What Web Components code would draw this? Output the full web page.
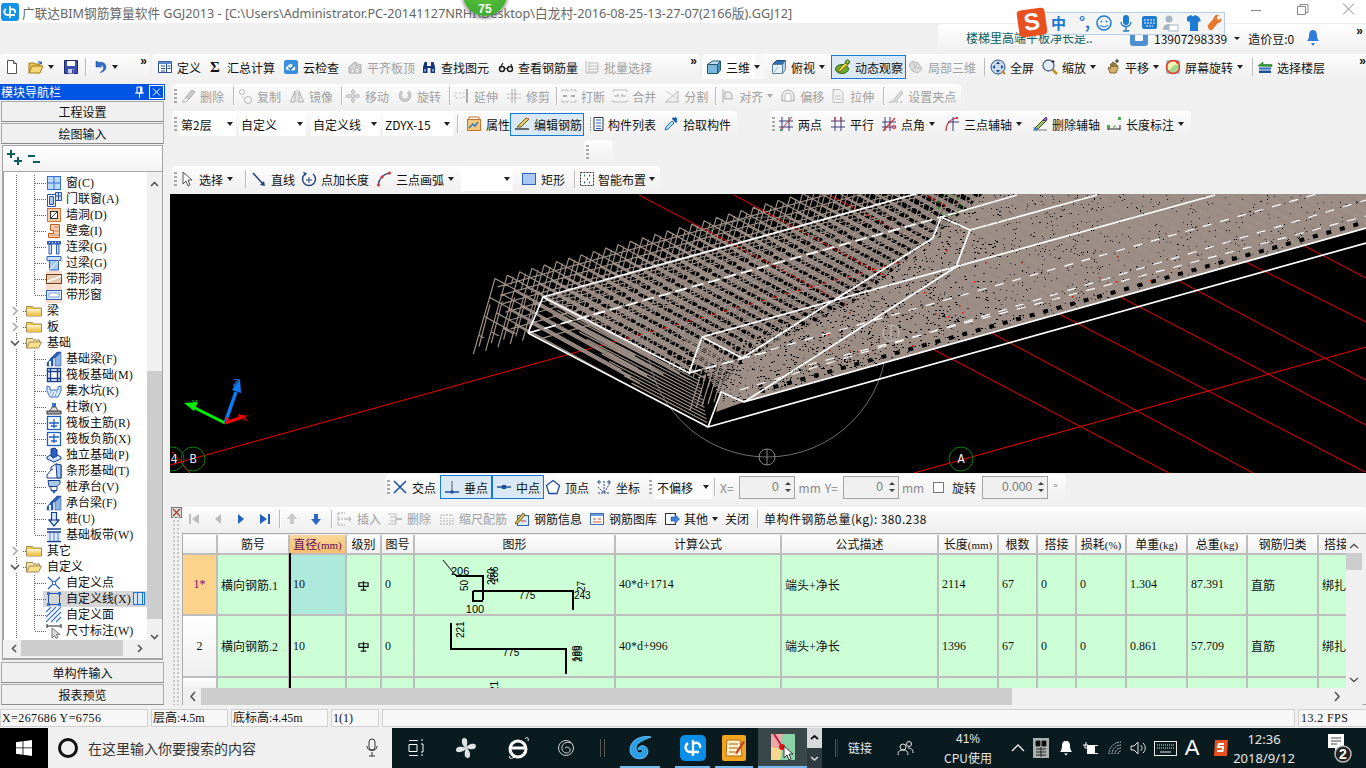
<!DOCTYPE html>
<html lang="zh">
<head>
<meta charset="utf-8">
<title>GGJ2013</title>
<style>
html,body{margin:0;padding:0;width:1366px;height:768px;overflow:hidden;background:#f0f0f0;font:12px "Noto Sans CJK SC","Noto Sans",sans-serif;color:#111}
</style>
</head>
<body>
<app-shell>
  <title-bar slot="title">广联达BIM钢筋算量软件 GGJ2013 - [C:\Users\Administrator.PC-20141127NRHI\Desktop\白龙村-2016-08-25-13-27-07(2166版).GGJ12]</title-bar>

  <top-row slot="top"></top-row>

  <tool-row slot="main-tools" style="height:26px">
    <tool-bar style="width:150px">
      <tb-btn icon="doc"></tb-btn><tb-btn icon="open" arrow></tb-btn><tb-btn icon="save" style="margin-left:1px"></tb-btn><tb-sep></tb-sep><tb-btn icon="undo" arrow style="margin-left:1px"></tb-btn><tb-more></tb-more>
    </tool-bar>
    <tool-bar style="margin-left:2px;width:548px;padding-left:1px">
      <tb-btn icon="define" style="margin-right:-2px">定义</tb-btn><tb-btn icon="sigma">汇总计算</tb-btn><tb-btn icon="cloud">云检查</tb-btn><tb-btn icon="level" disabled style="margin-right:-2px">平齐板顶</tb-btn><tb-btn icon="binoc" style="margin-right:1px">查找图元</tb-btn><tb-btn icon="glasses" style="margin-right:-2px">查看钢筋量</tb-btn><tb-btn icon="batch" disabled>批量选择</tb-btn><tb-more></tb-more>
    </tool-bar>
    <tool-bar style="margin-left:2px;flex:1">
      <tb-btn icon="cube" arrow plain>三维</tb-btn><tb-btn icon="cubetop" arrow style="margin-left:3px">俯视</tb-btn><tb-btn icon="orbit" active style="width:75px;margin-left:2px;margin-right:-2px">动态观察</tb-btn><tb-btn icon="local3d" disabled>局部三维</tb-btn><tb-sep style="margin:0 1px 0 4px"></tb-sep><tb-btn icon="full">全屏</tb-btn><tb-btn icon="zoomi" arrow>缩放</tb-btn><tb-btn icon="hand" arrow style="margin-left:1px;margin-right:-2px">平移</tb-btn><tb-btn icon="rotate" arrow>屏幕旋转</tb-btn><tb-sep style="margin:0 0 0 5px"></tb-sep><tb-btn icon="layers">选择楼层</tb-btn><tb-more></tb-more>
    </tool-bar>
  </tool-row>

  <nav-panel slot="nav">
    <tree-row level="2" icon="win">窗(C)</tree-row>
    <tree-row level="2" icon="doorwin">门联窗(A)</tree-row>
    <tree-row level="2" icon="hole">墙洞(D)</tree-row>
    <tree-row level="2" icon="niche">壁龛(I)</tree-row>
    <tree-row level="2" icon="lintel">连梁(G)</tree-row>
    <tree-row level="2" icon="guoliang">过梁(G)</tree-row>
    <tree-row level="2" icon="bandhole">带形洞</tree-row>
    <tree-row level="2" icon="bandwin" last>带形窗</tree-row>
    <tree-row level="1" icon="folder" twisty="closed">梁</tree-row>
    <tree-row level="1" icon="folder" twisty="closed">板</tree-row>
    <tree-row level="1" icon="folderopen" twisty="open">基础</tree-row>
    <tree-row level="2" icon="basebeam">基础梁(F)</tree-row>
    <tree-row level="2" icon="raft">筏板基础(M)</tree-row>
    <tree-row level="2" icon="pit">集水坑(K)</tree-row>
    <tree-row level="2" icon="pier">柱墩(Y)</tree-row>
    <tree-row level="2" icon="raftmain">筏板主筋(R)</tree-row>
    <tree-row level="2" icon="raftneg">筏板负筋(X)</tree-row>
    <tree-row level="2" icon="isolated">独立基础(P)</tree-row>
    <tree-row level="2" icon="strip">条形基础(T)</tree-row>
    <tree-row level="2" icon="pilecap">桩承台(V)</tree-row>
    <tree-row level="2" icon="basebeam">承台梁(F)</tree-row>
    <tree-row level="2" icon="pile">桩(U)</tree-row>
    <tree-row level="2" icon="band" last>基础板带(W)</tree-row>
    <tree-row level="1" icon="folder" twisty="closed">其它</tree-row>
    <tree-row level="1" icon="folderopen" twisty="open">自定义</tree-row>
    <tree-row level="2" icon="cpoint">自定义点</tree-row>
    <tree-row level="2" icon="cline" selected>自定义线(X)</tree-row>
    <tree-row level="2" icon="cface">自定义面</tree-row>
    <tree-row level="2" icon="dim" last>尺寸标注(W)</tree-row>
  </nav-panel>

  <tool-row slot="work" style="height:24px;margin-top:4px;padding-left:2px">
    <tool-bar grip style="height:24px;width:789px">
      <tb-btn icon="erase" disabled>删除</tb-btn><tb-sep style="margin:0 -1px 0 5px"></tb-sep><tb-btn icon="copy" disabled>复制</tb-btn><tb-btn icon="mirror" disabled>镜像</tb-btn><tb-sep style="margin:0 -1px 0 4px"></tb-sep><tb-btn icon="move" disabled>移动</tb-btn><tb-btn icon="spin" disabled>旋转</tb-btn><tb-sep style="margin:0 0 0 4px"></tb-sep><tb-btn icon="extend" disabled>延伸</tb-btn><tb-btn icon="trim" disabled>修剪</tb-btn><tb-sep style="margin:0 0 0 2px"></tb-sep><tb-btn icon="break" disabled style="margin-right:-1px">打断</tb-btn><tb-btn icon="merge" disabled>合并</tb-btn><tb-btn icon="split" disabled>分割</tb-btn><tb-sep style="margin:0 -1px 0 3px"></tb-sep><tb-btn icon="align" disabled arrow style="margin-right:-1px">对齐</tb-btn><tb-btn icon="offset" disabled style="margin-right:-2px">偏移</tb-btn><tb-btn icon="stretch" disabled>拉伸</tb-btn><tb-sep style="margin:0 -1px 0 5px"></tb-sep><tb-btn icon="grip2" disabled style="margin-left:1px">设置夹点</tb-btn>
    </tool-bar>
  </tool-row>

  <tool-row slot="work" style="height:26px;margin-top:3px;padding-left:2px">
    <tool-bar grip style="width:565px">
      <tb-select style="width:57px;margin-left:3px">第2层</tb-select><tb-select style="width:67px;margin-left:3px">自定义</tb-select><tb-select style="width:69px;margin-left:5px">自定义线</tb-select><tb-select style="width:70px;margin-left:3px">ZDYX-15</tb-select><tb-sep style="margin:0 2px 0 4px"></tb-sep><tb-btn icon="prop" style="margin-left:2px;margin-right:-4px">属性</tb-btn><tb-btn icon="pencil" active style="width:74px;height:23px">编辑钢筋</tb-btn><tb-btn icon="list" style="margin-right:-1px">构件列表</tb-btn><tb-btn icon="dropper">拾取构件</tb-btn>
    </tool-bar>
    <tool-bar grip style="margin-left:33px;width:421px">
      <tb-btn icon="twopt">两点</tb-btn><tb-btn icon="parallel">平行</tb-btn><tb-btn icon="ptangle" arrow style="margin-left:-1px;margin-right:1px">点角</tb-btn><tb-btn icon="threept" arrow style="margin-right:2px">三点辅轴</tb-btn><tb-btn icon="delaux" style="margin-right:-2px">删除辅轴</tb-btn><tb-btn icon="dimlen" arrow>长度标注</tb-btn>
    </tool-bar>
  </tool-row>

  <tool-row slot="work" style="height:24px;margin-top:3px;padding-left:414px">
    <tool-bar grip style="width:29px;height:24px"></tool-bar>
  </tool-row>

  <tool-row slot="work" style="height:26px;margin-top:2px;padding-left:2px">
    <tool-bar grip style="width:488px">
      <tb-btn icon="cursor" arrow style="margin-left:-1px">选择</tb-btn><tb-sep style="margin:0 1px 0 8px"></tb-sep><tb-btn icon="lineto" style="margin-right:-2px">直线</tb-btn><tb-btn icon="ptlen" style="margin-right:-1px">点加长度</tb-btn><tb-btn icon="arc" arrow style="margin-right:3px">三点画弧</tb-btn><tb-select style="width:52px"></tb-select><tb-btn icon="rect" style="margin-left:4px">矩形</tb-btn><tb-sep style="margin:0 0 0 5px"></tb-sep><tb-btn icon="smart" arrow compact>智能布置</tb-btn>
    </tool-bar>
  </tool-row>

  <cad-view slot="work"></cad-view>

  <tool-row slot="work" style="height:26px;margin-top:1px;padding-left:215px">
    <tool-bar grip style="width:681px;height:26px">
      <tb-btn icon="cross" style="margin-left:-1px">交点</tb-btn><tb-btn icon="perp" active style="width:52px;height:24px">垂点</tb-btn><tb-btn icon="mid" active style="width:52px;height:24px;margin-right:-3px">中点</tb-btn><tb-btn icon="vertex" style="margin-right:-1px">顶点</tb-btn><tb-btn icon="coord">坐标</tb-btn><tb-grip style="margin:0 0 0 5px"></tb-grip><tb-select style="width:57px;margin-left:3px">不偏移</tb-select><tb-sep style="margin:0 0 0 2px"></tb-sep><snap-label style="margin-left:5px">X=</snap-label><num-input style="width:56px;margin-left:5px">0</num-input><snap-label style="margin-left:4px">mm</snap-label><snap-label style="margin-left:4px">Y=</snap-label><num-input style="width:56px;margin-left:5px">0</num-input><snap-label style="margin-left:3px">mm</snap-label><check-box style="margin-left:9px"></check-box><snap-label style="margin-left:8px;color:#222">旋转</snap-label><num-input style="width:66px;margin-left:6px">0.000</num-input><snap-label style="margin-left:5px">°</snap-label>
    </tool-bar>
  </tool-row>

  <rebar-panel slot="work">
    <tool-bar slot="tools" style="height:23px;width:1184px">
      <tb-btn icon="first" disabled></tb-btn><tb-btn icon="prev" disabled></tb-btn><tb-btn icon="next" style="margin-left:-1px"></tb-btn><tb-btn icon="last"></tb-btn><tb-sep style="margin:0 0 0 2px"></tb-sep><tb-btn icon="up" disabled></tb-btn><tb-btn icon="down"></tb-btn><tb-sep style="margin:0 1px 0 3px"></tb-sep><tb-btn icon="insert" disabled>插入</tb-btn><tb-btn icon="delrow" disabled style="margin-left:-2px">删除</tb-btn><tb-btn icon="scale" disabled>缩尺配筋</tb-btn><tb-btn icon="info" style="margin-left:-1px">钢筋信息</tb-btn><tb-btn icon="lib" style="margin-left:-1px">钢筋图库</tb-btn><tb-btn icon="other" arrow style="margin-left:-1px">其他</tb-btn><tb-btn style="margin-left:-1px">关闭</tb-btn><tb-sep style="margin:0 0 0 4px"></tb-sep><span style="margin-left:6px;white-space:nowrap;letter-spacing:.4px">单构件钢筋总量(kg): 380.238</span>
    </tool-bar>
  </rebar-panel>

  <status-bar slot="status"></status-bar>
  <task-bar slot="task"></task-bar>
</app-shell>

<script>
const ICONS={
doc:`<path d="M3.5 1.5h6l3 3v10h-9z" fill="#fff" stroke="#555"/><path d="M9.5 1.5v3h3" fill="#ddd" stroke="#555"/>`,
open:`<path d="M1 14V4h5l1 1h5v2" fill="#e9c25a" stroke="#a37a1c"/><path d="M1 14l3-7h11l-3 7z" fill="#f6d775" stroke="#a37a1c"/><path d="M9 4c1-2 3-2 4-1l1-1v3h-3l1-1c-1-.7-2-.5-3 0z" fill="#2c6ac7"/>`,
save:`<path d="M1.5 1.5h13v13h-13z" fill="#3c4fb0" stroke="#1d2a70"/><path d="M4 2h8v5H4z" fill="#fff"/><path d="M5 10h6v4.500H5z" fill="#c9d0ea"/><path d="M9 10.500h1.500V14H9z" fill="#23307e"/>`,
undo:`<path d="M5 2v6h6l-2-2c2-.5 4 1 3.500 3.500-.3 1.500-1.500 3-3.500 4 4-.5 6-3 6-5.500 0-3.500-3.500-5.500-7-4.500z" fill="#2f6fc9" stroke="#174a93" stroke-width=".5" transform="translate(-1,0)"/>`,
define:`<path d="M1.500 2.500h13v11h-13z" fill="#fff" stroke="#2a4d92"/><path d="M1.500 2.500h13v2.500h-13z" fill="#5d86c9"/><path d="M4 7h4M4 9.500h4M4 12h4M9.500 5v8.500M10.500 7h3M10.500 9.500h3" stroke="#2a4d92"/>`,
sigma:`<text x="3" y="13" font-family="Liberation Serif" font-weight="bold" font-size="15" fill="#111">Σ</text>`,
cloud:`<rect x="1" y="1" width="14" height="14" rx="2" fill="#3a8fdc"/><path d="M4 11c-2-1-1-4 1-4 .5-2 4-3 5 0 3 0 3 4 1 4.500z" fill="#eaf5ff"/><path d="M5.500 8.500l2 2 3.500-4" fill="none" stroke="#2275c2" stroke-width="1.500"/>`,
level:`<path d="M2 14V8l6-5 2 1-1 3 4-2 1 1v8z" fill="#d4d4d4" stroke="#aaa"/><path d="M4 10h3v4H4zM9 9h3v5H9z" fill="#eee" stroke="#bbb"/>`,
binoc:`<path d="M2 14V8l1.500-5H6v4h4V3h2.500L14 8v6H9.500V9h-3v5z" fill="#15367c"/><path d="M3 10h2v2.500H3zM11 10h2v2.500h-2z" fill="#7da0dc"/>`,
glasses:`<circle cx="4" cy="10" r="2.500" fill="none" stroke="#222" stroke-width="1.500"/><circle cx="12" cy="10" r="2.500" fill="none" stroke="#222" stroke-width="1.500"/><path d="M6.500 9.500h3M1.500 9.500L5 4M14.500 9.500L13 5" stroke="#222" stroke-width="1.200" fill="none"/>`,
batch:`<path d="M2 2v12h11M5 4h9M5 7h9M5 10h9M5 13h9M5 3v11M14 4v9" stroke="#bbb" fill="none"/>`,
cube:`<path d="M1.500 5.500l5-3.500h8l-3 4h-10z" fill="#bfe0f2" stroke="#24566f"/><path d="M1.500 5.500h10v9h-10z" fill="#7cb9dd" stroke="#24566f"/><path d="M11.500 5.500l3-3.500v9l-3 3.500z" fill="#4e93bd" stroke="#24566f"/>`,
cubetop:`<path d="M1.500 5.500l4-4h9l-3 4z" fill="#2c6fb2" stroke="#21466f"/><path d="M1.500 5.500h10v9h-10z" fill="#e5f1f8" stroke="#5c7f99"/><path d="M11.500 5.500l3-4v9l-3 4z" fill="#bfd9ea" stroke="#5c7f99"/><path d="M3 13l4-5" stroke="#8fb3c9"/>`,
orbit:`<ellipse cx="7" cy="10" rx="6.500" ry="4.500" fill="#6faa35" stroke="#335f17"/><path d="M3 12c3-5 6-7 10-10l2 1c-3 4-6 6-10 10z" fill="#e7d43c" stroke="#6b5e12"/><circle cx="12.500" cy="3" r="2" fill="#8fce46" stroke="#355f15"/>`,
local3d:`<path d="M4 2l6 2 4 6-4 4-6-2-3-6z" fill="#ddd" stroke="#bbb"/><path d="M4 2l3 6-3 4M7 8l7 2M7 8l3-4" stroke="#c4c4c4" fill="none"/>`,
full:`<circle cx="8" cy="8" r="7" fill="#c9dcf2" stroke="#2e4d8a"/><path d="M8 2.500l2 2.500H6zM8 13.500L6 11h4zM2.500 8L5 6v4zM13.500 8L11 10V6z" fill="#21407f"/><path d="M12 12l3 3" stroke="#b78a22" stroke-width="2"/>`,
zoomi:`<circle cx="6.500" cy="6.500" r="5.500" fill="#e3edf7" stroke="#55657a" stroke-width="1.300"/><path d="M10.500 10.500l4.500 4.500" stroke="#b9902b" stroke-width="2.500"/><path d="M11 1v3M9.500 2.500h3" stroke="#223" />`,
hand:`<path d="M3 9l2 5h6l2-5V6.500l-1.500-.5L11 8V4.500L9.500 4 9 8V3.500L7.500 3 7 8V4.500L5.500 5v5L3.800 8z" fill="#d4b06a" stroke="#6d5520" stroke-width=".8"/><path d="M12 0v4M10 2h4" stroke="#223"/>`,
rotate:`<rect x="2" y="2" width="12" height="12" fill="#fdf2b8" stroke="#79a"/><path d="M3 12l6-6h5v3l-5 5H3z" fill="#9ddb8f"/><circle cx="8" cy="8" r="6.500" fill="none" stroke="#e13a2c" stroke-width="1.500"/><path d="M12 1l2.500 3-3.500.5z" fill="#e13a2c"/>`,
layers:`<path d="M1 7L6 3v2.500h9v2z" fill="#3aa33e" stroke="#1f6c22" stroke-width=".6"/><path d="M2 8.500h12v2H2z" fill="#2c6fc2"/><path d="M2 11.500h12v2.500H2z" fill="#1b4f98"/>`,
erase:`<path d="M2 14l4-5 3 2-3 3z" fill="#eee" stroke="#bbb"/><path d="M6 9l6-7 3 2-6 7z" fill="#ccc" stroke="#aaa"/>`,
copy:`<circle cx="5" cy="4" r="2.500" fill="none" stroke="#b5b5b5"/><circle cx="11" cy="12" r="3.500" fill="none" stroke="#b5b5b5"/><path d="M5 8l2 3" stroke="#bbb" stroke-dasharray="2 1"/>`,
mirror:`<path d="M6 3L1.500 14H6zM10 3l4.500 11H10z" fill="#eee" stroke="#aaa"/><path d="M8 1v14" stroke="#ccc"/>`,
move:`<path d="M8 1l2 3H9v3h3V6l3 2-3 2V9H9v3h1l-2 3-2-3h1V9H4v1L1 8l3-2v1h3V4H6z" fill="#ddd" stroke="#aaa" stroke-width=".7"/>`,
spin:`<path d="M4 3a6 6 0 1 0 8 0l-1.500 2a3.500 3.500 0 1 1-5 0z" fill="#ccc" stroke="#aaa" stroke-width=".6"/>`,
extend:`<path d="M1 5h9v5H1z" fill="none" stroke="#bbb" stroke-dasharray="2 2"/><path d="M13 1v14" stroke="#aaa" stroke-width="2"/>`,
trim:`<path d="M1 6h14M1 10h14" stroke="#bbb" stroke-dasharray="3 1"/><path d="M6 1v14M9 1v14" stroke="#aaa"/>`,
break:`<path d="M1 4v-2h6v2M9 2h6v2M1 12v2h6v-2M9 14h6v-2" fill="none" stroke="#bbb"/><path d="M2 8h4M10 8h4" stroke="#aaa" stroke-width="2"/>`,
merge:`<path d="M1 4v-2h14v2M1 12v2h14v-2" fill="none" stroke="#bbb"/><path d="M2 8h5l-2-2M14 8H9l2-2" fill="none" stroke="#aaa"/>`,
split:`<path d="M1 14h14M14 14V3L2 14" fill="#eee" stroke="#bbb"/><path d="M2 3l12 8" stroke="#ccc"/>`,
align:`<path d="M4 1v14M6 4h5l2 3v4H6z" fill="#eee" stroke="#aaa"/>`,
offset:`<path d="M2 13V8a6 6 0 0 1 12 0v5z" fill="#eee" stroke="#aaa"/><path d="M5 13V8a3 3 0 0 1 6 0v5z" fill="#fff" stroke="#bbb"/>`,
stretch:`<path d="M3 1.500h7l3 3v10H3z" fill="#f3f3f3" stroke="#bbb"/><path d="M5 8h6M5 11h6" stroke="#bbb"/>`,
grip2:`<path d="M4 14L13 3l2 2-8 9z" fill="#ddd" stroke="#bbb"/><path d="M1 14h3M8 14h2M12 14h2" stroke="#aaa"/>`,
prop:`<rect x="1.500" y="3.500" width="13" height="11" fill="#f5c97b" stroke="#c7722a"/><path d="M3 3V1h10v2" fill="#fff" stroke="#c7722a"/><path d="M3 12l4-4 2 2 3-4" fill="none" stroke="#2a7dd1" stroke-width="1.500"/>`,
pencil:`<path d="M1 13h14" stroke="#222" stroke-width="1.300"/><path d="M3 11l2-2 7-7 3 1-8 8z" fill="#e7cf68" stroke="#6d5a12"/><path d="M12 2l3 1" stroke="#d66"/>`,
list:`<path d="M6 1.500h9v13H6z" fill="#fff" stroke="#334"/><path d="M8 4h5M8 7h5M8 10h5M8 12.500h5" stroke="#2460b6"/><path d="M2 2h2M2 5h2M2 8h2M2 11h2M2 14h2" stroke="#456" stroke-dasharray="1 1"/>`,
dropper:`<path d="M2 14l1-3 6-6 2 2-6 6z" fill="#bfe0f9" stroke="#1a6dc2"/><path d="M9 3l4 4 1.500-1.500-1-1 1-1.500-2-2-1.500 1-1-1z" fill="#155ba8"/>`,
twopt:`<path d="M4 1v14M11 1v14M1 5h14M1 11h14" stroke="#3b3b7c"/><path d="M2 15L14 1" stroke="#d3353a"/><circle cx="3" cy="14" r="1.200" fill="#3fa33f"/>`,
parallel:`<path d="M5 1v14M11 1v14M1 5h14M1 11h14" stroke="#3b3b7c"/><path d="M5 1v5M11 1v5" stroke="#d3353a"/>`,
ptangle:`<path d="M4 1v14M9 1v14M1 6h14M1 11h14" stroke="#3b3b7c"/><path d="M2 15L14 2" stroke="#d3353a" stroke-width="1.200"/><circle cx="13" cy="11" r="1.800" fill="none" stroke="#d3353a"/>`,
threept:`<path d="M2 15C2 8 6 3 13 2" fill="none" stroke="#d3353a" stroke-width="1.200"/><path d="M9 1v14M4 6h11" stroke="#3b3b7c"/><circle cx="13" cy="2" r="1.200" fill="#d3353a"/>`,
delaux:`<path d="M1 14h14" stroke="#777" /><path d="M3 12l8-8 3 1-8 8z" fill="#9ec36e" stroke="#3e5c1e"/><path d="M11 4l3-3 1 2-1 2z" fill="#9368c2" stroke="#4b2d76"/><path d="M1 11l5 2-3 2z" fill="#3e7ccd"/>`,
dimlen:`<path d="M2 9v5M14 9v5M2 13h12" stroke="#222"/><rect x="1" y="9" width="3" height="3" fill="#4baa4b"/><rect x="12" y="1" width="3" height="3" fill="#4baa4b"/><path d="M7 11h2v-2" stroke="#4baa4b"/>`,
cursor:`<path d="M4 1v12l3-3 2 5 2-1-2-5h4z" fill="#fff" stroke="#555"/>`,
lineto:`<path d="M2 2l10 11" stroke="#1e3f7f" stroke-width="1.500"/><path d="M14 15l-5-1 4-4z" fill="#1e3f7f"/>`,
ptlen:`<path d="M4 3A6.500 6.500 0 1 0 12 3" fill="none" stroke="#25497f" stroke-width="1.500"/><path d="M2 1l4 1-2 3z" fill="#25497f"/><path d="M8 6v6M5 9h6" stroke="#25497f"/>`,
arc:`<path d="M2 15C3 7 7 3 14 2" fill="none" stroke="#4d4d7c" stroke-width="1.500"/><circle cx="2.500" cy="14" r="1.500" fill="#d3353a"/><circle cx="6" cy="6" r="1.500" fill="#d3353a"/><circle cx="13.500" cy="2" r="1.500" fill="#d3353a"/>`,
rect:`<rect x="1.500" y="2.500" width="13" height="11" fill="#abc8f0" stroke="#2e63b5"/>`,
smart:`<rect x="1.500" y="1.500" width="13" height="13" fill="#fff" stroke="#333" stroke-dasharray="2 1"/><path d="M5 4.500h1M10 4.500h1M8 8h1M5 11.500h1M10 11.500h1" stroke="#1f5fc4" stroke-width="2"/>`,
cross:`<path d="M2 2l12 12M14 2L2 14" stroke="#1d4f9e" stroke-width="1.500"/>`,
perp:`<path d="M1 13h14" stroke="#1d4f9e" stroke-width="1.500"/><path d="M8 2v11" stroke="#555"/><rect x="6.500" y="11.500" width="3" height="3" fill="#1d4f9e"/>`,
mid:`<path d="M1 8h14" stroke="#1d4f9e" stroke-width="1.500"/><rect x="6" y="6" width="4" height="4" fill="#1d4f9e"/>`,
vertex:`<path d="M8 1.500l6.500 5-2.500 8H4l-2.500-8z" fill="#fff" stroke="#1d4f9e" stroke-width="1.300"/>`,
coord:`<path d="M2 14h12M8 2v12M2 8l6 6 6-10" stroke="#24497f" fill="none" stroke-dasharray="2 1"/><circle cx="3" cy="3" r="1.200" fill="none" stroke="#24497f"/><circle cx="13" cy="3" r="1.200" fill="none" stroke="#24497f"/>`,
first:`<path d="M3 3h2v10H3z M6 8l7-5v10z" fill="#bdbdbd"/>`,
prev:`<path d="M5 8l6-5v10z" fill="#bdbdbd"/>`,
next:`<path d="M5 3l6 5-6 5z" fill="#2461bf"/>`,
last:`<path d="M3 3l7 5-7 5z M11 3h2v10h-2z" fill="#2461bf"/>`,
up:`<path d="M8 2l5 6h-3v5H6V8H3z" fill="#c8c8c8"/>`,
down:`<path d="M8 14l5-6h-3V3H6v5H3z" fill="#2e68c4"/>`,
insert:`<path d="M1 2h7M1 8h7M1 14h7M1 2v12" fill="none" stroke="#aaa" stroke-dasharray="2 1"/><path d="M8 8h6M12 6l2 2-2 2" fill="none" stroke="#aaa"/>`,
delrow:`<path d="M1 3h8v10H1M3 6h6M3 10h6" fill="none" stroke="#bbb"/><path d="M9 8h6" stroke="#aaa" stroke-width="1.500"/>`,
scale:`<path d="M2 14V4h12M5 14V7M8 14V7M11 14V7M14 14V7" fill="none" stroke="#aaa" stroke-dasharray="2 1"/>`,
info:`<rect x="3.500" y="4.500" width="11" height="10" fill="#dcebfa" stroke="#2f65b0"/><path d="M1 12L9 2l2 2-8 9z" fill="#e5c458" stroke="#6d5a12"/><path d="M7 10h5" stroke="#c33"/>`,
lib:`<rect x="1.500" y="2.500" width="13" height="11" fill="#fff" stroke="#3b6fb5"/><path d="M2 3h12v2H2z" fill="#6f9bd9"/><path d="M4 8h3M9 8h3M4 11h8" stroke="#d0502e"/>`,
other:`<rect x="1.500" y="2.500" width="10" height="11" fill="#fff" stroke="#333"/><path d="M7 6h4V3.500L15.500 8 11 12.500V10H7z" fill="#3f80d8" stroke="#1d4f9e" stroke-width=".6"/>`,
win:`<rect x="1.500" y="1.500" width="13" height="13" fill="#bcd8fb" stroke="#2f6fcf"/><path d="M8 2v12M2 8h12" stroke="#2f6fcf"/>`,
doorwin:`<path d="M1.500 3.500h8v12h-8z" fill="#fff" stroke="#2a55b0"/><path d="M3.500 5.500h4v8h-4z" fill="#abc8f0" stroke="#2a55b0"/><path d="M9.500 1.500h6v8h-6z" fill="#cfe1fa" stroke="#2a55b0"/><path d="M12.500 1.500v8M9.500 5h6" stroke="#2a55b0"/>`,
hole:`<rect x="1.500" y="1.500" width="13" height="13" fill="#f6cfb0" stroke="#d6722f"/><rect x="4.500" y="4.500" width="7" height="7" fill="#fff" stroke="#333"/><path d="M4.500 11.500l7-7" stroke="#333"/>`,
niche:`<path d="M4.500 1.500h9v13h-11v-4h5v-3h-3z" fill="#f6cfb0" stroke="#c4591c"/><path d="M8 4h5M8 8h5M5 12h8" stroke="#d98552"/>`,
lintel:`<path d="M1 2h14v3.500H1z" fill="#2b5fc0"/><path d="M3 5.500h2.500V15H3zM10.500 5.500H13V15h-2.500z" fill="#cfe1fa" stroke="#2b5fc0"/><path d="M3 3.500h1M6 3.500h1M9 3.500h1M12 3.500h1" stroke="#fff"/>`,
guoliang:`<path d="M1 1.500h14v4H1z" fill="#cfe1fa" stroke="#2b5fc0"/><path d="M3.500 5.500h9v9.500h-9z" fill="#a9c9ef" stroke="#2b5fc0"/><path d="M3.500 15l9-9.500" stroke="#fff"/>`,
bandhole:`<rect x="0" y="0" width="16" height="16" fill="#f9dccb"/><rect x="0.500" y="3.500" width="15" height="9" fill="#e7c7ae" stroke="#6d3e1c"/><path d="M1 11C6 8 10 8 15 5" stroke="#fff" stroke-width="1.500" fill="none"/>`,
bandwin:`<rect x="0" y="0" width="16" height="16" fill="#f9dccb"/><rect x="0.500" y="3.500" width="15" height="9" fill="#dde9fb" stroke="#2b5fc0"/><path d="M3 6h10v4H3z" fill="#fff" stroke="#7ca1de"/>`,
basebeam:`<path d="M1 15v-3l4-5 2 0v8zM5 7l6-6h4L9 7z" fill="#2b5fc0" stroke="#133c85" stroke-width=".5"/><path d="M9 7l6-6v14H9z" fill="#8db2e4" stroke="#133c85" stroke-width=".5"/><path d="M3 15V10h2v5z" fill="#fff"/>`,
raft:`<rect x="1.500" y="1.500" width="13" height="13" fill="#fff" stroke="#163f8a" stroke-width="1.400"/><path d="M4.500 2v12M11.500 2v12M2 4.500h12M2 11.500h12" stroke="#163f8a" stroke-width="1.400"/>`,
pit:`<path d="M1 3l3 1v3h8V4l3-1v5l-3 6H4L1 8z" fill="#dbe9fb" stroke="#3b6fc2"/><path d="M4 9h1M7 10h1M10 9h1M6 12h1M9 12h1" stroke="#3b6fc2"/>`,
pier:`<path d="M1 12h14v3H1z" fill="#aaa" stroke="#333"/><path d="M4 12l2-4h4l2 4z" fill="#ddd" stroke="#555"/><path d="M6 8h4V4H6z" fill="#3b6fc2"/>`,
raftmain:`<rect x="1.500" y="1.500" width="13" height="13" fill="#fff" stroke="#1f5fc4" stroke-width="1.300"/><path d="M3 8h10M8 4v9M5 11h6" stroke="#1f5fc4" stroke-width="1.300"/>`,
raftneg:`<rect x="1.500" y="1.500" width="13" height="13" fill="#fff" stroke="#1f5fc4" stroke-width="1.300"/><path d="M3 6h10M8 3v9M5 10h6" stroke="#1f5fc4" stroke-width="1.300"/>`,
isolated:`<path d="M1 10l7-4 7 4v2l-7 3-7-3z" fill="#cfe1fa" stroke="#163f8a"/><path d="M5 2l4-1 2 2v6l-4 2-2-2z" fill="#2b5fc0" stroke="#163f8a"/>`,
strip:`<path d="M1 15v-3l4-5V4l5-3 5 1v13z" fill="#fff" stroke="#163f8a"/><path d="M10 1l5 1v13h-4z" fill="#a4c3ea" stroke="#163f8a"/><path d="M5 7l2-1" stroke="#163f8a"/>`,
pilecap:`<path d="M2 1.500h12v3l-3 3H3z" fill="#a9c9ef" stroke="#163f8a"/><path d="M5 7.500h6v4H5z" fill="#fff" stroke="#163f8a"/><path d="M8 11.500l-2 .5 2 3 2-3z" fill="#2b5fc0"/>`,
pile:`<path d="M5.500 1.500h5V9h2.500L8 15 3 9h2.500z" fill="#dbe9fb" stroke="#163f8a" stroke-width="1.200"/><path d="M3 9h10" stroke="#163f8a"/>`,
band:`<path d="M1 2h14M1 5h14M1 14.500h14" stroke="#163f8a" stroke-width="1.300"/><path d="M4 5v9M8 5v9M12 5v9" stroke="#2b5fc0" stroke-width="1.300"/><rect x="1" y="6" width="14" height="8" fill="#bcd8fb" opacity=".5"/>`,
cpoint:`<path d="M2 2l12 12M14 2L2 14" stroke="#2b5fc0" stroke-width="1.300"/><circle cx="8" cy="8" r="1.800" fill="#fff" stroke="#2b5fc0"/>`,
cline:`<rect x="2.500" y="2.500" width="11" height="11" fill="none" stroke="#1f4fb0"/><rect x="1" y="1" width="3" height="3" fill="#2f75dc"/><rect x="12" y="1" width="3" height="3" fill="#2f75dc"/><rect x="1" y="12" width="3" height="3" fill="#2f75dc"/><rect x="12" y="12" width="3" height="3" fill="#2f75dc"/>`,
cface:`<path d="M0 5L5 0M0 10L10 0M0 15L15 0M5 15L15 5M10 15l5-5" stroke="#2f6fcf" stroke-width="1.100"/>`,
dim:`<path d="M1 1v4M15 1v4M1 3h14" stroke="#222"/><path d="M6 5v10l2.500-2.500 1.500 3 2-1-1.500-3H14z" fill="#ddd" stroke="#777"/>`,
folder:`<path d="M.5 13V3.500h6l1 1.500h8v8z" fill="#f0c640" stroke="#a18a5a"/><path d="M1 6h14v7H1z" fill="url(#fg)"/><defs><linearGradient id="fg" x2="0" y2="1"><stop stop-color="#fff6cf"/><stop offset="1" stop-color="#eab92f"/></linearGradient></defs>`,
folderopen:`<path d="M.5 13V3.500h6l1 1.500h6v2" fill="#f5e4a8" stroke="#a18a5a"/><path d="M.5 13l3-6h12l-3 6z" fill="#fbe08a" stroke="#a18a5a"/>`
};
function def(name,cls){customElements.define(name,cls)}
function shadow(el,html){el.attachShadow({mode:'open'}).innerHTML=html;return el.shadowRoot}
const SERIF=`"Liberation Serif","Noto Sans CJK SC",serif`;

def('ui-icon',class extends HTMLElement{connectedCallback(){
  const s=this.getAttribute('size')||16,n=this.getAttribute('name');
  shadow(this,`<style>:host{display:inline-block;width:${s}px;height:${s}px;flex:none;line-height:0}svg{display:block}</style><svg width="${s}" height="${s}" viewBox="0 0 16 16" fill="none">${ICONS[n]||''}</svg>`);
}});

def('app-shell',class extends HTMLElement{connectedCallback(){shadow(this,`<style>
:host{display:grid;width:1366px;height:768px;position:relative;overflow:hidden;grid-template-rows:23px 31px 26px 627px 21px 40px;background:#f0f0f0}
.mid{display:grid;grid-template-columns:170px 1fr;min-height:0}
.work{display:flex;flex-direction:column;min-width:0}
.navwrap{padding-top:4px}
</style>
<slot name="title"></slot><slot name="top"></slot><slot name="main-tools"></slot>
<div class="mid"><div class="navwrap"><slot name="nav"></slot></div><div class="work"><slot name="work"></slot></div></div>
<slot name="status"></slot><slot name="task"></slot>`)}});

def('title-bar',class extends HTMLElement{connectedCallback(){shadow(this,`<style>
:host{display:flex;align-items:center;height:23px;background:#fff;color:#666;position:relative;font:12.68px "Noto Sans","Noto Sans CJK SC",sans-serif;white-space:nowrap;overflow:visible}
.logo{width:18px;height:20px;margin:0 3px 0 1px;flex:none;display:block}
.txt{flex:1;overflow:hidden;padding-top:1px}
.ctl{position:absolute;top:0;right:0;display:flex;height:23px}
.ctl svg{display:block}
.badge{position:absolute;left:463px;top:-28px;width:44px;height:44px;border-radius:50%;background:radial-gradient(circle at 50% 30%,#6fcb45,#30a52a);box-shadow:0 2px 3px 1px rgba(90,90,90,.55);z-index:4;display:flex;align-items:flex-end;justify-content:center;color:#fff;font:bold 12px "Liberation Sans",sans-serif;box-sizing:border-box;line-height:14px}
</style>
<svg class="logo" viewBox="0 0 18 20"><rect x="0" y="1" width="18" height="18" rx="3" fill="#1293e8"/><path d="M9 4v12M5 7c-3 2-2 6 2 6h7M9 8c3-2 6 0 5 3" fill="none" stroke="#fff" stroke-width="1.800"/></svg>
<div class="txt"><slot></slot></div>
<div class="badge">75</div>
<div class="ctl"><svg width="119" height="23"><path d="M1 10.500h10" stroke="#888"/><path d="M47.500 6.500h8v8h-8zM50 6.500V4.500h8v8h-2" fill="none" stroke="#888"/><path d="M93 3.500l11 11M104 3.500l-11 11" stroke="#888"/></svg></div>`)}});

def('top-row',class extends HTMLElement{connectedCallback(){shadow(this,`<style>
:host{display:flex;height:31px;position:relative;font-size:12px}
.a{position:absolute;left:938px;top:1px;width:187px;height:28px;border-radius:4px;background:linear-gradient(#fff,#f0f0f0);color:#0a5c5c;padding-left:28px;box-sizing:border-box;line-height:28px}
.b{position:absolute;left:1125px;top:1px;right:0;height:28px;border-radius:4px;background:linear-gradient(#fff,#f0f0f0);display:flex;align-items:center;color:#111}
.ph{margin-left:5px;width:18px;height:16px;flex:none;border-radius:3px;background:#4f8fd0;position:relative}
.ph:after{content:"";position:absolute;left:5px;top:5px;width:8px;height:6px;background:#fff;border-radius:1px}
.t{margin-left:6px}
i{display:block;border:solid transparent;border-width:3px 3px 0;border-top-color:#222;margin-left:7px}
.bell{margin-left:12px}
.more{position:absolute;right:6px;top:0;font:bold 12px "Liberation Sans";line-height:14px}
.ime{position:absolute;left:1018px;top:-14px;height:36px;width:207px;z-index:5}
.bar{position:absolute;left:20px;top:3px;right:0;height:23px;background:#f4f4f5;border:1px solid #b7cee3;box-sizing:border-box;color:#1976d2;font:bold 15px "Noto Sans CJK SC",sans-serif}
.s{position:absolute;left:0;top:0;width:28px;height:27px;border-radius:4px;background:#e8501f;transform:rotate(-8deg);color:#fff;font:bold 24px/26px "Liberation Sans";text-align:center;z-index:1}
.zh{position:absolute;left:12px;top:-1px;line-height:22px}
.pun{position:absolute;left:40px;top:-1px;line-height:20px}
.bar svg{position:absolute;top:1px;left:53px}
</style>
<div class="a">楼梯里高端平板净长是..</div>
<div class="b"><span class="ph"></span><span class="t">13907298339</span><i></i><span class="t" style="margin-left:8px">造价豆:0</span>
<svg class="bell" width="14" height="18" viewBox="0 0 14 18"><path d="M7 1c-3 0-4 3-4 6 0 2-1 4-2 5h12c-1-1-2-3-2-5 0-3-1-6-4-6zM5 14h4l-2 3z" fill="#2f7ddb"/></svg>
<span class="more">»</span></div>
<div class="ime"><div class="s">S</div><div class="bar"><span class="zh">中</span><span class="pun">°,</span>
<svg width="131" height="18" viewBox="0 0 131 18"><circle cx="12" cy="9" r="7" fill="none" stroke="#1e7bd4" stroke-width="1.600"/><circle cx="9.500" cy="7.500" r="1" fill="#1e7bd4"/><circle cx="14.500" cy="7.500" r="1" fill="#1e7bd4"/><path d="M8 11c2 2.500 6 2.500 8 0" fill="none" stroke="#1e7bd4" stroke-width="1.200"/><rect x="31" y="1" width="6" height="10" rx="3" fill="#1e7bd4"/><path d="M29 8c0 6 10 6 10 0M34 13v4M31 17h6" fill="none" stroke="#1e7bd4" stroke-width="1.400"/><rect x="50" y="2" width="15" height="13" rx="2" fill="#1e7bd4"/><path d="M52 6h11M52 9h11M54 12h7" stroke="#fff" stroke-dasharray="2 1"/><circle cx="77" cy="5" r="3.500" fill="#a8b6c4"/><path d="M71 16c0-4 2-6 6-6l2 1v5z" fill="#a8b6c4"/><rect x="77" y="11" width="9" height="6" fill="#fff" stroke="#a8b6c4"/><path d="M95 3l4-2 2 1.500 2-1.500 4 2 2 4-3 1v9H98V8l-3-1z" fill="#1e7bd4"/><path d="M120 16l6-7c2 0 4-2 3-5l-2 2-2-1 0-2 2-2c-3-1-5 1-5 3l-6 7c-1 3 2 6 4 5z" fill="#e8772e"/></svg></div></div>`)}});

def('tool-row',class extends HTMLElement{connectedCallback(){shadow(this,`<style>:host{display:flex;align-items:flex-start;flex:none}</style><slot></slot>`)}});

def('tool-bar',class extends HTMLElement{connectedCallback(){const g=this.hasAttribute('grip');shadow(this,`<style>
:host{display:flex;align-items:center;height:26px;box-sizing:border-box;background:linear-gradient(#fdfdfd,#f3f3f3 70%,#f0f0f0);border-radius:4px;position:relative;flex:none;white-space:nowrap}
.grip{width:3px;height:14px;margin:0 -1px 0 2px;background:repeating-linear-gradient(#a8a8a8 0 2px,transparent 2px 4px);flex:none}
</style>${g?'<span class="grip"></span>':''}<slot></slot>`)}});

def('tb-grip',class extends HTMLElement{connectedCallback(){shadow(this,`<style>:host{display:block;width:3px;height:14px;flex:none;background:repeating-linear-gradient(#a8a8a8 0 2px,transparent 2px 4px)}</style>`)}});
def('tb-more',class extends HTMLElement{connectedCallback(){shadow(this,`<style>:host{position:absolute;right:3px;top:0;font:bold 12px/14px "Liberation Sans",sans-serif;color:#111}</style>»`)}});
def('tb-sep',class extends HTMLElement{connectedCallback(){shadow(this,`<style>:host{display:block;flex:none;width:1px;height:18px;margin:0 1px 0 2px;background:#b9b9b9;box-shadow:1px 0 #fff}</style>`)}});

def('tb-btn',class extends HTMLElement{connectedCallback(){
  const ic=this.getAttribute('icon'),ar=this.hasAttribute('arrow'),dis=this.hasAttribute('disabled');
  shadow(this,`<style>
:host{display:inline-flex;align-items:center;height:24px;box-sizing:border-box;padding:0 4px;gap:4px;flex:none;color:#111;white-space:nowrap;font-size:12px}
:host([disabled]){color:#a0a0a0}
:host([active]){background:#dbe9f5;box-shadow:inset 0 0 0 1px #127ad8}
:host([plain]){background:linear-gradient(90deg,#fff 85%,#f8f8f8 85%)}
:host([compact]){gap:3px;padding-right:0}
i{display:block;border:solid transparent;border-width:4px 3px 0;border-top-color:${dis?'#aaa':'#222'}}
</style>${ic?`<ui-icon name="${ic}"></ui-icon>`:''}<slot></slot>${ar?'<i></i>':''}`);
}});

def('tb-select',class extends HTMLElement{connectedCallback(){shadow(this,`<style>
:host{display:flex;align-items:center;height:24px;background:#fff;box-sizing:border-box;padding:0 3px 0 2px;flex:none;white-space:nowrap}
span{flex:1}i{display:block;border:solid transparent;border-width:4px 3px 0;border-top-color:#222}
</style><span><slot></slot></span><i></i>`)}});

def('snap-label',class extends HTMLElement{connectedCallback(){shadow(this,`<style>:host{display:block;flex:none;color:#8a8a8a;font-size:12px}</style><slot></slot>`)}});
def('check-box',class extends HTMLElement{connectedCallback(){shadow(this,`<style>:host{display:block;flex:none;width:11px;height:11px;border:1px solid #777;background:#fff;box-sizing:border-box}</style>`)}});
def('num-input',class extends HTMLElement{connectedCallback(){shadow(this,`<style>
:host{display:flex;flex:none;height:23px;box-sizing:border-box;border:1px solid #a3a3a3;background:#f0f0f0;color:#777;font:12px "Liberation Sans",sans-serif}
.v{flex:1;text-align:right;padding-right:3px;line-height:21px}
.s{width:12px;display:flex;flex-direction:column;align-items:center;justify-content:space-around;padding:3px 0;box-sizing:border-box}
i{display:block;border:solid transparent;border-width:0 3px 3px;border-bottom-color:#444}
i+i{border-width:3px 3px 0;border-top-color:#444;border-bottom-color:transparent}
</style><div class="v"><slot></slot></div><div class="s"><i></i><i></i></div>`)}});

def('nav-panel',class extends HTMLElement{connectedCallback(){shadow(this,`<style>
:host{display:flex;flex-direction:column;width:165px;height:621px;font-size:12px}
.hd{height:16px;background:#0054e3;color:#fff;display:flex;align-items:center;padding-left:1px;position:relative;line-height:16px;flex:none;white-space:nowrap}
.hd svg{position:absolute;right:0;top:0}
.btn{flex:none;height:21px;margin:1px 1px 0 1px;border:1px solid #a9a9a9;border-bottom-color:#8a8a8a;background:#f0f0f0;box-sizing:border-box;text-align:center;line-height:19px;color:#111}
.panel{flex:1;min-height:0;margin:1px 2px 0 2px;border:1px solid #a5a5a5;background:#f0f0f0;display:flex;flex-direction:column;box-sizing:border-box}
.tools{height:25px;background:linear-gradient(#fff,#f3f3f3);display:flex;align-items:center;padding-left:3px;gap:4px;flex:none}
.body{flex:1;min-height:0;display:flex;border-top:1px solid #a5a5a5;border-left:1px solid #a5a5a5}
.tree{flex:1;min-width:0;background:#fff;overflow:hidden;padding-top:3px;position:relative}
.vs{width:15px;flex:none;background:#f0f0f0;position:relative}
.thumb{position:absolute;left:0;right:0;top:199px;height:248px;background:#cdcdcd}
.hs{height:18px;flex:none;background:#f0f0f0;position:relative;border-bottom:1px solid #a5a5a5}
.hs b{position:absolute;left:18px;top:0;width:102px;height:16px;background:#cdcdcd}
.hs svg{position:absolute;left:8px;top:4px}
</style>
<div class="hd">模块导航栏<svg width="40" height="16"><path d="M12 3h5v6h-5zM10 9h9M14.500 9v5" fill="none" stroke="#fff"/><path d="M15 3h2v6h-2z" fill="#fff"/><rect x="24.500" y="1.500" width="14" height="13" fill="none" stroke="#fff"/><path d="M28 4.500l7 7M35 4.500l-7 7" stroke="#fff"/></svg></div>
<div class="btn">工程设置</div><div class="btn">绘图输入</div>
<div class="panel">
<div class="tools"><svg width="44" height="20" viewBox="0 0 44 20"><path d="M4 1h2v3h3v2H6v3H4V6H1V4h3zM11 8h2v3h3v2h-3v3h-2v-3H8v-2h3z" fill="#0f5c5c"/><path d="M22 6h7v2h-7zM27 12h7v2h-7z" fill="#0f5c5c"/></svg></div>
<div class="body"><div class="tree"><slot></slot></div>
<div class="vs"><div class="thumb"></div>
<svg width="15" height="470" style="position:absolute;left:0;top:0"><path d="M4 14l3.500-3.500L11 14M4 463l3.500 3.500L11 463" fill="none" stroke="#555" stroke-width="1.600"/></svg></div></div>
<div class="hs"><b></b><svg width="140" height="9"><path d="M5 1L1.500 4.500 5 8" fill="none" stroke="#555" stroke-width="1.600"/><path d="M127 1l3.500 3.500L127 8" fill="none" stroke="#555" stroke-width="1.600"/></svg></div>
</div>
<div class="btn" style="margin-top:2px">单构件输入</div><div class="btn">报表预览</div>`)}});

def('tree-row',class extends HTMLElement{connectedCallback(){
  const lv=this.getAttribute('level'),ic=this.getAttribute('icon'),tw=this.getAttribute('twisty'),last=this.hasAttribute('last');
  const dots='repeating-linear-gradient(#666 0 1px,transparent 1px 2px)';
  const dh='repeating-linear-gradient(90deg,#666 0 1px,transparent 1px 2px)';
  const two=tw==='open'?`<svg class="tw" width="10" height="8"><path d="M1 1l4 4 4-4" fill="none" stroke="#555" stroke-width="1.700"/></svg>`:tw==='closed'?`<svg class="tw" width="8" height="10"><path d="M1 1l4 4-4 4" fill="none" stroke="#aaa" stroke-width="1.700"/></svg>`:'';
  shadow(this,`<style>
:host{display:block;height:16px;position:relative;font:12px/16px ${SERIF};color:#111;white-space:nowrap}
.v1{position:absolute;left:12px;top:0;bottom:0;width:1px;background:${dots}}
.v2{position:absolute;left:30px;top:0;bottom:${last?'8px':'0'};width:1px;background:${dots}}
.h{position:absolute;top:8px;height:1px;background:${dh}}
.tw{position:absolute;left:${tw==='open'?6:8}px;top:${tw==='open'?5:3}px;background:#fff}
ui-icon{position:absolute;top:0}
.t{position:absolute;top:0}
.sel{position:absolute;left:39px;right:0;top:0;bottom:0;background:#d6d6d6}
.mini{position:absolute;left:129px;top:1px;width:12px;height:13px;background:#cfe4fb;border:1px solid #1d74d8;box-sizing:border-box}
.mini:after{content:"";position:absolute;left:3px;top:0;bottom:0;width:4px;border:solid #1d74d8;border-width:0 1px}
</style>
${this.hasAttribute('selected')?'<div class="sel"></div><div class="mini"></div>':''}
<div class="v1"></div>
${lv==='2'?`<div class="v2"></div><div class="h" style="left:31px;width:11px"></div><ui-icon name="${ic}" style="left:42px"></ui-icon><span class="t" style="left:62px"><slot></slot></span>`:
`<div class="h" style="left:19px;width:3px"></div>${two}<ui-icon name="${ic}" style="left:22px"></ui-icon><span class="t" style="left:43px"><slot></slot></span>`}`);
}});

def('cad-view',class extends HTMLElement{connectedCallback(){
  let seed=12345;const R=()=>(seed=(seed*1664525+1013904223)>>>0)/4294967296;
  const L=(a,b,c,d)=>`M${a.toFixed(1)} ${b.toFixed(1)}L${c.toFixed(1)} ${d.toFixed(1)}`;
  let mesh='',hang='';
  const tx=i=>495+12.3*i,ty=i=>278.5-3.4*i;
  const inner=x=>297+.52*(x-543);
  // hanging ends at the far left
  for(let i=0;i<5;i++){hang+=L(tx(i),ty(i),tx(i)-21.7,ty(i)+75.7);}
  for(let i=0;i<5;i++){const x=tx(i)-5,y=ty(i)+26;hang+=L(x,y,x-11,y+42);}
  // steep bars: run from the zigzag edge down to the inner edge
  for(let i=5;i<64;i++){let x=tx(i),y=ty(i),s=0;while(s<6&&y+s*75.7<inner(x-s*21.7))s+=.05;mesh+=L(x,y,x-s*21.7,y+s*75.7);}
  for(let i=0;i<64;i++){const x=tx(i)+6,y=ty(i)+2;let s=0;while(s<6&&y+s*75.7<inner(x-s*21.7))s+=.05;mesh+=L(x,y,x-s*21.7,y+s*75.7);}
  // cross bars from the zigzag edge
  for(let j=0;j<4;j++){for(let i=0;i<64;i++){
    const x=tx(i)-5.4*j,y=ty(i)+18.9*j,t=(j==0?140:150-j*18)+i*4;
    mesh+=L(x,y,x+t,y+t*.55);
  }}
  // rails along the length
  for(let k=1;k<9;k++){const x=495-2.4*k,y=278.5+8.4*k;mesh+=L(x+k*5,y,x+k*5+520,y-520*.28);}
  for(let x=545;x<700;x+=9){const y=inner(x);mesh+=L(x,y,x+340,y-340*.28);}
  // long bars under the inner edge
  const edge=(x,d)=>333+.522*(x-528)-d;
  for(let d=4;d<42;d+=3.4){const a=548+(42-d)*2.2,b=708-d*.2;mesh+=L(a,edge(a,d),b,edge(b,d));}
  // dense wedge at the bend
  for(let k=0;k<26;k++){const x=680+k*2,y=335+k*3;mesh+=L(x,y,x+80,y+41);}
  for(let k=0;k<16;k++){const x=690+k*6,y=410-k*2;mesh+=L(x,y,x+18,y-60);}
  let specks='',n=0;
  const inPoly=(x,y)=>{const lo=228+(1366-x)*.2797,hi=(x<930)?(240+(930-x)*.56):(x<983?240-(x-930)*.87:194);return y<lo-2&&y>hi};
  while(n<1700){const x=700+R()*666,y=194+R()*240;if(!inPoly(x,y))continue;
    const keep=x<960?1:(x<1100?.55:.33);if(R()>keep)continue;
    const a=x<1000&&R()<.4?2:1;specks+=`M${x|0} ${y|0}h${a}v1h-${a}z`;n++}
  let redd='';
  for(let i=0;i<40;i++){const x=820+R()*340,y=250+R()*120;if(inPoly(x,y))redd+=`M${x|0} ${y|0}h1.500v1.500h-1.500z`;}
  const red=[[639,195,1169,473],[734,195,1253,473],[829,195,1365,472],[925,195,1366,425],[1017,195,1366,380],[1110,194,1366,322],[1205,194,1366,278],[170,465,1366,133],[914,473,1366,347],[172,452,190,473]];
  shadow(this,`<style>:host{display:block;width:1196px;height:279px;margin-top:2px;background:#000;flex:none;overflow:hidden}svg{display:block}
  text{font-family:"Liberation Mono",monospace}</style>
<svg width="1196" height="279" viewBox="170 194 1196 279">
<defs><clipPath id="mc"><path d="M470 194H1366V227L744 401 721 391 708 426 528 332 470 340z"/></clipPath></defs>
<circle cx="767" cy="337" r="120" fill="none" stroke="#8a8a8a" stroke-width=".8"/>
<path d="${red.map(r=>L(...r)).join('')}" stroke="#f00500" stroke-width="1" fill="none"/>
<path d="M983 194H1366V228L744 402 716 412 722 385 744 360 800 330 860 298 930 240z" fill="#9a8b83"/>
<path d="${hang}" stroke="#9d8f87" stroke-width="1.200" fill="none"/>
<g clip-path="url(#mc)"><path d="${mesh}" stroke="#9d8f87" stroke-width="1.200" fill="none"/></g>
<path d="M760 391L1366 222" stroke="#000" stroke-width="4" stroke-dasharray="5 9"/>
<path d="${specks}" fill="#000"/>
<path d="${redd}" fill="#f00500"/>
<g fill="none" stroke="#fff" stroke-linejoin="round">
<path stroke-width="1.700" d="M528 333L708 427L1366 243M528 333L543 297L1100 143M543 297L689 373L702 337L742 358L933 238L941 217L970 230L956 267L744 402L721 392L708 427M721 392L744 402L1366 228M702 337L1215 195M970 230L1097 195M941 217L1017 195"/>
<path stroke-width="1.600" d="M528 333L941 217M689 373L770 351" stroke-dasharray="12 5"/>
<path stroke-width="1.200" d="M770 350L1366 180M808 365L1366 216M740 390L1366 200" stroke-dasharray="9 9"/>
</g>
<circle cx="767" cy="457" r="8" fill="none" stroke="#888"/><path d="M767 449v16" stroke="#888"/>
<circle cx="891" cy="333" r="8" fill="none" stroke="#c9c0ba"/><path d="M891 325v16" stroke="#c9c0ba"/>
<circle cx="949" cy="205" r="11" fill="none" stroke="#0a8a0a" stroke-dasharray="3 3"/>
<g fill="none" stroke="#0a7d0a"><circle cx="193" cy="459" r="12"/><circle cx="172" cy="459" r="12"/><circle cx="961" cy="459" r="12"/></g>
<text x="193" y="463" font-size="12" fill="#e8e8e8" text-anchor="middle">B</text>
<text x="174" y="463" font-size="12" fill="#e8e8e8" text-anchor="middle">4</text>
<text x="961" y="463" font-size="12" fill="#e8e8e8" text-anchor="middle">A</text>
<path d="M225 423L195 408" stroke="#00f000" stroke-width="3"/><path d="M184 403L198 402 194 411z" fill="#00f000"/>
<path d="M225 423L236 392" stroke="#0a7df5" stroke-width="3.500"/><path d="M240 379L241 393 232 390z" fill="#0a7df5"/>
<path d="M225 423L240 418" stroke="#f00500" stroke-width="3"/><path d="M246 416L238 414 240 420z" fill="#f00500"/>
<text x="233" y="386" font-size="11" fill="#1a7df0">Z</text>
<text x="192" y="406" font-size="9" fill="#00e000">Y</text>
<text x="242" y="421" font-size="9" fill="#f00500">X</text>
<path d="M225 423l2 -6 3 4" stroke="#f00500" fill="none"/>
</svg>`);
}});

def('rebar-panel',class extends HTMLElement{connectedCallback(){
  const cols=[35,72,57,35,33,201,166,157,60,39,39,50,61,60,71,60];
  const head=['','筋号','直径(mm)','级别','图号','图形','计算公式','公式描述','长度(mm)','根数','搭接','损耗(%)','单重(kg)','总重(kg)','钢筋归类','搭接形式'];
  const shape1=`<svg class="sh" width="200" height="61" viewBox="415 553 200 61"><g fill="none" stroke="#000"><path d="M443 558l13 16" stroke-width="1"/><path stroke-width="2" d="M456 574h27v24M473 589v10h10M473 589h100v19"/></g>
<g font-family="Liberation Sans" font-size="11" fill="#000"><text x="451" y="573">206</text><text x="475" y="611" text-anchor="middle">100</text><text x="527" y="597" text-anchor="middle" font-size="10">775</text><text transform="translate(468,589) rotate(-90)" font-size="10">50</text><text transform="translate(495,583) rotate(-90)" font-size="10">260</text><text transform="translate(498,581) rotate(-90)" font-size="10">186</text><text transform="translate(585,590) rotate(-90)" font-size="10">27</text><text x="574" y="597" font-size="10">243</text></g></svg>`;
  const shape2=`<svg class="sh" width="200" height="61" viewBox="415 614 200 61"><path d="M451 621v26h115v25" fill="none" stroke="#000" stroke-width="2"/><g font-family="Liberation Sans" font-size="10" fill="#000"><text transform="translate(464,636) rotate(-90)">221</text><text x="511" y="654" text-anchor="middle">775</text><text transform="translate(580,660) rotate(-90)">189</text><text transform="translate(582,660) rotate(-90)">289</text></g></svg>`;
  const shape3=`<svg class="sh" width="200" height="12" viewBox="415 676 200 12"><text transform="translate(498,690) rotate(-90)" font-family="Liberation Sans" font-size="10" fill="#000">21</text></svg>`;
  const rows=[
   ['1*','横向钢筋.1','10','⌀','0',shape1,'40*d+1714','端头+净长','2114','67','0','0','1.304','87.391','直筋','绑扎'],
   ['2','横向钢筋.2','10','⌀','0',shape2,'40*d+996','端头+净长','1396','67','0','0','0.861','57.709','直筋','绑扎'],
   ['','','','','',shape3,'','','','','','','','','','']];
  const cg=cols.map(w=>`<col style="width:${w}px">`).join('');
  const th=head.map((h,i)=>`<th class="${i==2?'cur':''}">${h.replace(/\((mm|kg|%)\)/,'<small>($1)</small>')}</th>`).join('');
  const tr=rows.map((r,ri)=>`<tr style="height:${[61,62,14][ri]}px">`+r.map((c,i)=>{
    if(i==0)return `<td class="rh ${ri==0?'on':''}">${c}</td>`;
    if(i==3&&c)return `<td class="ctr"><svg width="11" height="11" viewBox="0 0 12 12"><path d="M1 3h10v4H1zM6 1v10M3 11h6" fill="none" stroke="#111" stroke-width="1.300"/></svg></td>`;
    if(i==5)return `<td class="shp"><div class="shw">${c}</div></td>`;
    if(i==2)return `<td class="${ri==0?'cell-on':''}">${c}</td>`;
    return `<td>${c}</td>`;}).join('')+`</tr>`).join('');
  shadow(this,`<style>
:host{display:flex;width:1196px;height:205px;flex:none;position:relative}
.strip{width:12px;flex:none;position:relative;padding-top:7px;box-sizing:border-box}
.x{width:11px;height:11px;margin-left:1px;display:block}
.dots{position:absolute;left:2px;top:15px;bottom:0;width:8px;background-image:radial-gradient(circle,#c6c6c6 1px,transparent 1.300px);background-size:4px 4px}
.main{flex:1;min-width:0;display:flex;flex-direction:column;padding-top:7px;box-sizing:border-box}
.gridbox{margin-top:3px;flex:none;width:1184px;height:172px;border:1px solid #aaa;border-right:0;box-sizing:border-box;background:#f0f0f0;display:grid;grid-template-columns:1163px 16px;grid-template-rows:153px 17px;padding-top:1px}
.tb{overflow:hidden;height:153px;background:#fff}
table{border-collapse:separate;border-spacing:0;table-layout:fixed;width:1195px;font:12px ${SERIF};color:#111;background:#ccffd6}
th{height:18px;box-sizing:border-box;padding:0;border:solid #bdbdbd;border-width:0 2px 2px 0;background:linear-gradient(#fff,#f0f0f0);font-weight:normal;text-align:center;overflow:hidden;white-space:nowrap}
th small{font-size:11px}
th.cur{background:linear-gradient(#fbd89b,#f6bf6c);color:#5e0a5e}
td{padding:0 0 0 3px;border:solid #bdbdbd;border-width:0 2px 2px 0;white-space:nowrap;overflow:hidden;box-sizing:border-box}
td.rh{background:linear-gradient(#fff,#efefef);text-align:center;padding:0}
td.rh.on{background:#fdd28a;color:#7a0a7a}
td.cell-on{background:#aeeadb}
td.ctr{text-align:center;padding:0}
td.ctr svg{vertical-align:middle}
td.shp{padding:0;position:relative}
.shw{position:absolute;left:0;top:0;right:0;bottom:0;overflow:hidden}
svg.sh{display:block}
.vline{position:absolute;left:106px;top:18px;bottom:0;width:1.500px;background:#000}
.tbw{position:relative;overflow:hidden}
.vs{background:#f0f0f0;position:relative}
.vs b{position:absolute;left:0;right:0;top:18px;height:17px;background:#cdcdcd}
.vs svg{position:absolute;left:0;top:0}
.hs{grid-column:1/3;background:#f0f0f0;position:relative}
.hs b{position:absolute;left:18px;top:0;width:811px;height:17px;background:#cdcdcd}
.hs svg{position:absolute;left:0;top:0}
</style>
<div class="strip"><svg class="x" viewBox="0 0 11 11"><rect x=".5" y=".5" width="10" height="10" fill="#ddd" stroke="#777"/><path d="M2 2l7 7M9 2L2 9" stroke="#a0402a" stroke-width="1.300"/></svg><div class="dots"></div></div>
<div class="main"><slot name="tools"></slot>
<div class="gridbox"><div class="tbw"><div class="tb"><table><colgroup>${cg}</colgroup><thead><tr>${th}</tr></thead><tbody>${tr}</tbody></table></div><div class="vline"></div></div>
<div class="vs"><b></b><svg width="16" height="153"><path d="M4 13l4-3.500 4 3.500M4 143l4 3.500 4-3.500" fill="none" stroke="#555" stroke-width="1.500"/></svg></div>
<div class="hs"><b></b><svg width="1180" height="17"><path d="M12 4L8 8.500l4 4.500M1152 4l4 4.500-4 4.500" fill="none" stroke="#555" stroke-width="1.600"/></svg></div></div></div>`);
}});

def('status-bar',class extends HTMLElement{connectedCallback(){shadow(this,`<style>
:host{display:flex;height:21px;padding-top:2px;box-sizing:border-box;gap:3px;font:12px ${SERIF};color:#111}
div{height:18px;background:#f7f7f7;border:1px solid #d0d0d0;box-sizing:border-box;line-height:17px;padding-left:1px;white-space:nowrap;flex:none;overflow:hidden}
.mono{letter-spacing:.4px}
</style>
<div class="mono" style="width:148px">X=267686 Y=6756</div><div style="width:77px">层高:4.5m</div><div style="width:97px">底标高:4.45m</div><div style="width:48px">1(1)</div><div style="width:913px"></div><div class="mono" style="width:71px;padding-left:2px">13.2 FPS</div>`)}});

def('task-bar',class extends HTMLElement{connectedCallback(){shadow(this,`<style>
:host{display:flex;height:40px;background:#0a1b20;color:#f0f0f0;font:12px "Noto Sans CJK SC",sans-serif;position:relative;overflow:hidden}
.start{width:48px;background:#000;display:flex;align-items:center;justify-content:center;flex:none}
.search{width:344px;flex:none;background:#f0f0f0;color:#333;display:flex;align-items:center;font-size:14px;position:relative}
.search .o{width:14px;height:14px;border:3px solid #111;border-radius:50%;margin:0 10px;flex:none}
.search svg{position:absolute;right:13px;top:10px}
.it{position:absolute;top:0;height:40px;display:flex;align-items:center;justify-content:center}
.u:after{content:"";position:absolute;left:0;right:0;bottom:0;height:2px;background:#76b9ed}
.act{background:#39474b}
.ud{position:absolute;left:807px;top:0;width:15px;height:40px;font-size:0}
.ud i{display:block;height:20px;background:#d7d9da;position:relative}.ud i+i{background:#2e3b40}
.t{position:absolute;text-align:center;white-space:nowrap;transform:translateX(-50%);line-height:16px;color:#e8e8e8}
</style>
<div class="start"><svg width="16" height="16"><path d="M0 2.200L6.600 1.300V7.500H0zM7.400 1.200L16 0V7.500H7.400zM0 8.300H6.600V14.700L0 13.800zM7.400 8.300H16V16L7.400 14.800z" fill="#fff"/></svg></div>
<div class="search"><span class="o"></span>在这里输入你要搜索的内容<svg width="14" height="20"><rect x="4" y="1" width="6" height="11" rx="3" fill="none" stroke="#333"/><path d="M2 8c0 6 10 6 10 0M7 14v4M4 18h6" fill="none" stroke="#333"/></svg></div>
<div class="it" style="left:408px;width:16px"><svg width="16" height="18"><path d="M1 1.500h9M1 16.500h9M1 5.500h8v7H1zM13 1h2M13 5h2v8h-2M13 16h2" fill="none" stroke="#fff"/></svg></div>
<div class="it" style="left:455px;width:22px"><svg width="22" height="22" viewBox="0 0 22 22" fill="#dfe3e5"><path d="M11 11C7 10 5 1 9 1s4 5 2 10zM11 11c1-4 10-6 10-2s-5 4-10 2zM11 11c4 1 6 10 2 10s-4-5-2-10zM11 11c-1 4-10 6-10 2s5-4 10-2z"/></svg></div>
<div class="it" style="left:507px;width:22px"><svg width="22" height="24" viewBox="0 0 22 24"><circle cx="11" cy="13" r="8" fill="none" stroke="#fff" stroke-width="3"/><path d="M4 12h15" stroke="#fff" stroke-width="3"/><path d="M18 3c2-3 4-1 3 2M3 20c-2 3 2 3 4 1" fill="none" stroke="#fff"/></svg></div>
<div class="it" style="left:557px;width:18px"><svg width="18" height="18" viewBox="0 0 18 18" fill="none" stroke="#cfd3d5"><circle cx="9" cy="9" r="7.500"/><path d="M14 4c-5-2-10 1-9 6s7 5 8 2-2-5-5-3"/></svg></div>
<div class="it" style="left:600px;width:3px;border:solid #555;border-width:0 1px;height:18px;top:11px"></div>
<div class="it u" style="left:620px;width:40px"><svg width="26" height="28" viewBox="0 0 26 28"><path d="M24 3C14 1 3 6 3 16c0 8 10 11 15 7 4-3 4-9-1-11-3-1-6 1-6 4 3-2 5 0 4 2s-6 1-6-4C9 9 16 6 24 3z" fill="#2a9fe8" stroke="#63c2f7" stroke-width="1"/></svg></div>
<div class="it u" style="left:675px;width:35px"><svg width="26" height="26" viewBox="0 0 26 26"><rect width="26" height="26" rx="5" fill="#0a8fe9"/><path d="M13 5v16M8 8c-4 3-3 9 3 9h8M13 9c4-3 8 0 7 4" fill="none" stroke="#fff" stroke-width="2.300"/></svg></div>
<div class="it u" style="left:715px;width:38px"><svg width="24" height="26" viewBox="0 0 24 26"><rect width="24" height="26" rx="2" fill="#f2a51e"/><path d="M5 5h13l2 16H4z" fill="#fdf0c9" stroke="#b2670f"/><path d="M7 9h9M7 13h9M7 17h6" stroke="#a8611a"/><path d="M13 18l8-12 2 1-8 12z" fill="#c33f2a"/></svg></div>
<div class="it u act" style="left:758px;width:49px"><svg width="24" height="28" viewBox="0 0 24 28"><rect width="24" height="26" fill="#8ad4a7"/><path d="M0 0h12L8 13 0 22z" fill="#f3a6a6"/><path d="M0 13l11 2-2 11H0z" fill="#f7d88e"/><path d="M3 0l9 14" stroke="#b22b4a" stroke-width="2"/><circle cx="11" cy="13" r="3" fill="#e01414"/><path d="M13 12v12l3-3 2 5 2-1-2-5h4z" fill="#fff" stroke="#333"/></svg></div>
<div class="ud"><i><svg width="15" height="20"><path d="M4 11l3.500-3 3.500 3" fill="none" stroke="#111" stroke-width="1.800"/></svg></i><i><svg width="15" height="20"><path d="M4 9l3.500 3 3.500-3" fill="none" stroke="#ddd" stroke-width="1.600"/></svg></i></div>
<div class="it" style="left:835px;width:1px;border-left:1px solid #556;border-right:1px solid #334;top:11px;height:18px"></div>
<span class="t" style="left:860px;top:12px">链接</span>
<div class="it" style="left:896px;width:18px"><svg width="18" height="18" fill="none" stroke="#e8e8e8"><circle cx="7" cy="8" r="3"/><path d="M2 16c0-4 2-5 5-5s5 1 5 5"/><circle cx="13" cy="5" r="2.500"/><path d="M12 9c3 0 5 1 5 5"/></svg></div>
<span class="t" style="left:968px;top:3px;font-family:'Liberation Sans'">41%</span>
<span class="t" style="left:968px;top:22px">CPU使用</span>
<div class="it" style="left:1011px;width:14px"><svg width="14" height="10"><path d="M1 8l6-6 6 6" fill="none" stroke="#eee" stroke-width="1.300"/></svg></div>
<div class="it" style="left:1033px;width:16px"><svg width="16" height="20"><rect width="16" height="20" fill="#aab0b0"/><path d="M3 3h4v5H3zM9 3h4v5H9zM3 11h10M3 14h10M3 17h10M8 9v10" stroke="#222"/></svg></div>
<div class="it" style="left:1059px;width:14px"><svg width="14" height="16"><path d="M7 1c-3 0-4 2-4 5 0 3-1 5-2 6h12c-1-1-2-3-2-6 0-3-1-5-4-5zM5 13.500h4L7 15.500z" fill="#fff"/></svg></div>
<div class="it" style="left:1082px;width:16px"><svg width="18" height="16"><rect x="5.500" y="5.500" width="11" height="8" fill="none" stroke="#fff"/><rect x="6" y="6" width="7" height="7" fill="#fff"/><path d="M4 2v3M1 5h5M3 5v3M3 8h3" stroke="#fff"/></svg></div>
<div class="it" style="left:1107px;width:16px"><svg width="16" height="16" fill="none" stroke="#e8e8e8"><path d="M2 14a12 12 0 0 1 12-12M5 14a9 9 0 0 1 9-9M8 14a6 6 0 0 1 6-6M11 14a3 3 0 0 1 3-3" stroke-dasharray="1.500 1"/></svg></div>
<div class="it" style="left:1130px;width:16px"><svg width="17" height="16" fill="none" stroke="#e8e8e8"><path d="M1 6h3l4-4v12l-4-4H1zM10.500 5c2 2 2 4 0 6M13 3c3 3 3 7 0 10"/></svg></div>
<div class="it" style="left:1154px;width:23px"><svg width="23" height="15"><rect x=".5" y=".5" width="22" height="14" fill="none" stroke="#e8e8e8"/><path d="M3 4h17M3 7h17" stroke="#e8e8e8" stroke-dasharray="1 1"/><path d="M6 11h11" stroke="#e8e8e8"/></svg></div>
<span class="t" style="left:1192px;top:7px;font:22px/26px 'Liberation Sans',sans-serif;color:#fff">A</span>
<div class="it" style="left:1213px;width:16px"><svg width="16" height="18"><path d="M2 1h13l-1 16H1z" fill="#e8501f"/><path d="M11 5H6L5 8h5l-.5 4H4" fill="none" stroke="#fff" stroke-width="2"/></svg></div>
<span class="t" style="left:1264px;top:3px;font-family:'Noto Sans',sans-serif;font-size:13px">12:36</span>
<span class="t" style="left:1264px;top:22px;font-family:'Noto Sans',sans-serif;font-size:13px">2018/9/12</span>
<div class="it" style="left:1325px;width:28px"><svg width="28" height="34" viewBox="0 0 28 34"><path d="M3 3h16v14h-6l-3 3v-3H3z" fill="#fff"/><path d="M6 7h10M6 10h10M6 13h6" stroke="#444"/><circle cx="18" cy="23" r="8" fill="#222" stroke="#bbb" stroke-width="1.500"/><text x="18" y="28" text-anchor="middle" font-size="14" font-weight="bold" fill="#fff" font-family="Liberation Sans">2</text></svg></div>`)}});
</script>
</body>
</html>
